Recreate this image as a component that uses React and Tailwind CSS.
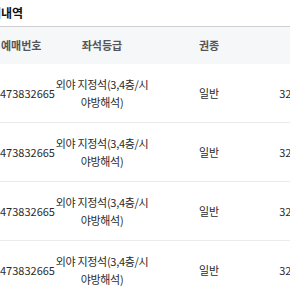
import React from 'react'

const rows = [1, 2, 3, 4].map((n) => ({
  id: n,
  no: '473832665',
  seat: '외야 지정석(3,4층/시야방해석)',
  type: '일반',
  price: '32,000원',
}))

const App = () => {
  return (
    <div
      className="w-[290px] h-[290px] overflow-hidden bg-white text-[#222]"
      style={{ fontFamily: '"Noto Sans CJK KR", "Noto Sans", sans-serif' }}
    >
      <div className="w-[400px]">
        <div className="h-[26px] flex items-center -ml-[21px] text-[12px] font-bold text-[#111] leading-none">
          예매내역
        </div>
        <div className="border-t border-[#cfcfcf]" />
        <div className="flex items-center h-[37px] bg-[#f6f7f9] text-[11px] font-bold text-[#555]">
          <div className="w-[54px] pl-[1px]">예매번호</div>
          <div className="w-[96px] text-center">좌석등급</div>
          <div className="w-[118px] text-center">권종</div>
          <div className="w-[66px] text-center">가격</div>
        </div>
        {rows.map((r) => (
          <div
            key={r.id}
            className="flex items-center h-[59px] border-b border-[#ececef] text-[11px] text-[#2b2b2b] leading-[18px]"
          >
            <div className="w-[54px] whitespace-nowrap">{r.no}</div>
            <div className="w-[96px] text-center break-all tracking-[-0.3px]">{r.seat}</div>
            <div className="w-[118px] text-center">{r.type}</div>
            <div className="w-[66px] text-center">{r.price}</div>
          </div>
        ))}
      </div>
    </div>
  )
}

export default App
